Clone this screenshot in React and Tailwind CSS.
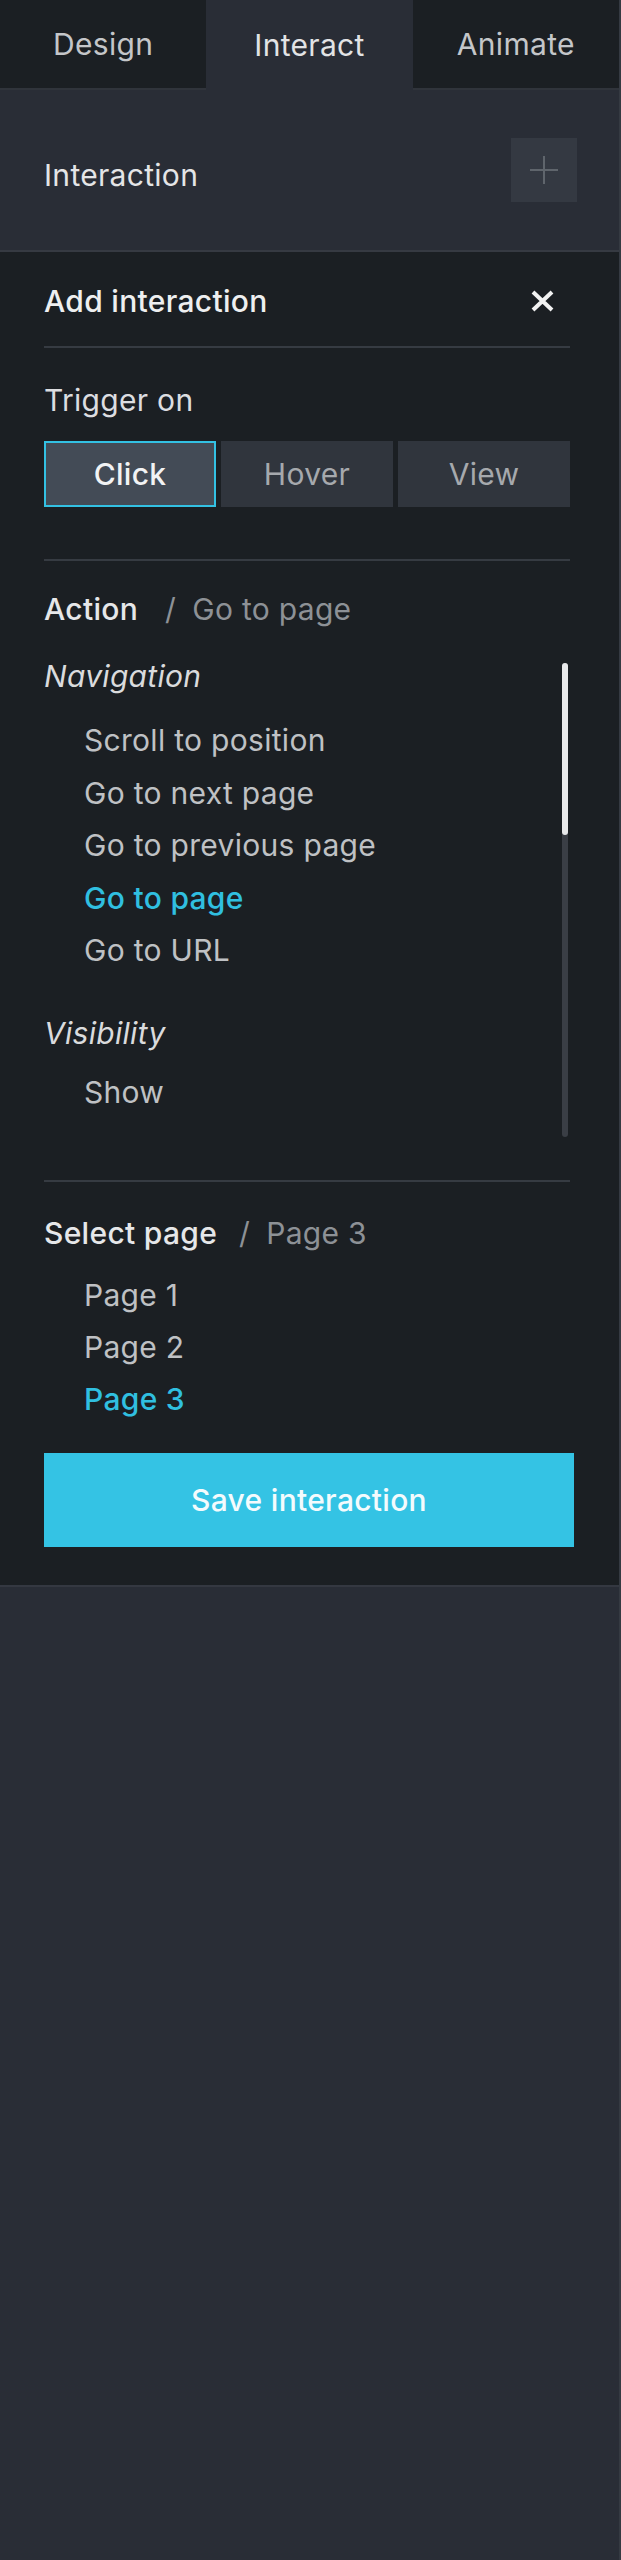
import React from "react";

const tabs = ["Design", "Interact", "Animate"];
const triggers = ["Click", "Hover", "View"];
const navItems = [
	"Scroll to position",
	"Go to next page",
	"Go to previous page",
	"Go to page",
	"Go to URL",
];
const pages = ["Page 1", "Page 2", "Page 3"];

const App = () => {
	return (
		<div className="min-h-screen w-full bg-[#292d36] border-r-2 border-[#353a42] font-['Inter',sans-serif] text-[30px] leading-[32px] tracking-[0.3px]">
			{/* Tabs */}
			<div className="flex h-[90px]">
				{tabs.map((tab) =>
					tab === "Interact" ? (
						<div
							key={tab}
							className="w-1/3 flex items-center justify-center bg-[#292d36] text-[#e2e3e5]"
						>
							{tab}
						</div>
					) : (
						<div
							key={tab}
							className="w-1/3 flex items-center justify-center bg-[#1b1f23] text-[#c4c6c9] border-b-2 border-[#30343b]"
						>
							{tab}
						</div>
					)
				)}
			</div>

			{/* Interaction header */}
			<div className="h-[162px] flex items-center justify-between pl-[44px] pr-[42px] border-b-2 border-[#363a42]">
				<span className="mt-[10px] text-[#e4e5e7]">Interaction</span>
				<button className="w-[66px] h-[64px] bg-[#343942] flex items-center justify-center">
					<svg width="28" height="28" viewBox="0 0 28 28">
						<path d="M14 0v28M0 14h28" stroke="#5f656c" strokeWidth="2" />
					</svg>
				</button>
			</div>

			{/* Add interaction panel */}
			<div className="bg-[#1b1f23] pl-[44px] pr-[49px] pb-[38px] border-b-2 border-[#343841]">
				<div className="h-[94px] pt-[4px] flex items-center justify-between pr-[16px]">
					<span className="text-[#eeeff0] font-medium">Add interaction</span>
					<svg width="23" height="22" viewBox="0 0 23 22">
						<path d="M2 2l19 18M21 2L2 20" stroke="#f2f2f2" strokeWidth="4" />
					</svg>
				</div>
				<div className="h-[2px] bg-[#363b42]" />

				{/* Trigger */}
				<div className="mt-[36px] text-[#dcdde0]">Trigger on</div>
				<div className="mt-[25px] grid grid-cols-3 gap-[5px]">
					{triggers.map((t) =>
						t === "Click" ? (
							<div
								key={t}
								className="h-[66px] flex items-center justify-center bg-[#434b56] border-2 border-[#33c1e3] text-[#f2f3f4] font-medium"
							>
								{t}
							</div>
						) : (
							<div
								key={t}
								className="h-[66px] flex items-center justify-center bg-[#30353d] text-[#a6a9ad]"
							>
								{t}
							</div>
						)
					)}
				</div>
				<div className="mt-[52px] h-[2px] bg-[#363b42]" />

				{/* Action */}
				<div className="mt-[32px] flex items-center">
					<span className="text-[#e6e7e9] font-medium">Action</span>
					<span className="ml-[27px] text-[#8d9196]">/</span>
					<span className="ml-[16px] text-[#8d9196]">Go to page</span>
				</div>

				<div className="mt-[35px] flex">
					<div className="flex-1 pb-[19px]">
						<div className="italic text-[#dadbdd]">Navigation</div>
						<div className="mt-[22px]">
							{navItems.map((item) => (
								<div
									key={item}
									className={`pl-[40px] h-[52.5px] flex items-center ${
										item === "Go to page" ? "text-[#30bfe0] font-medium" : "text-[#bfc1c4]"
									}`}
								>
									{item}
								</div>
							))}
						</div>
						<div className="mt-[40px] italic text-[#dadbdd]">Visibility</div>
						<div className="mt-[17px] pl-[40px] h-[52px] flex items-center text-[#bfc1c4]">
							Show
						</div>
					</div>
					{/* scrollbar */}
					<div className="mt-[3px] mr-[2px] w-[6px] bg-[#3a3e45] rounded-full relative">
						<div className="absolute top-0 left-0 w-[6px] h-[172px] bg-[#e8e9ea] rounded-full" />
					</div>
				</div>

				<div className="mt-[43px] h-[2px] bg-[#363b42]" />

				{/* Select page */}
				<div className="mt-[35px] flex items-center">
					<span className="text-[#e6e7e9] font-medium">Select page</span>
					<span className="ml-[22px] text-[#8d9196]">/</span>
					<span className="ml-[16px] text-[#8d9196]">Page 3</span>
				</div>
				<div className="mt-[20px]">
					{pages.map((p) => (
						<div
							key={p}
							className={`pl-[40px] h-[52px] flex items-center ${
								p === "Page 3" ? "text-[#30bfe0] font-medium" : "text-[#bfc1c4]"
							}`}
						>
							{p}
						</div>
					))}
				</div>

				<button className="mt-[28px] -mr-[4px] w-[calc(100%+4px)] h-[94px] bg-[#34c3e4] text-[#f4fbfd] font-medium flex items-center justify-center">
					Save interaction
				</button>
			</div>
		</div>
	);
};

export default App;
